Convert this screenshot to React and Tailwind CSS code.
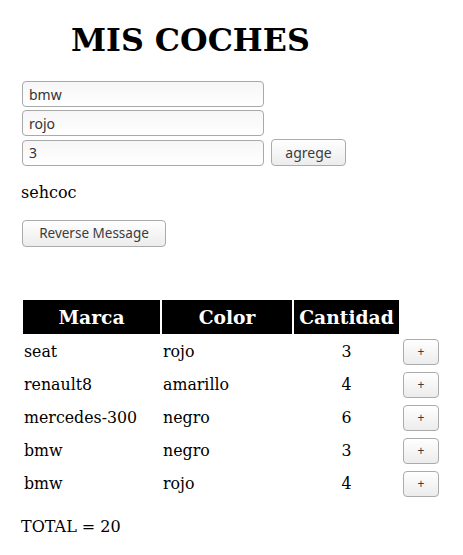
import React from "react";

const serif = { fontFamily: '"DejaVu Serif", "Liberation Serif", serif' };
const ui = { fontFamily: '"Noto Sans", "Open Sans", sans-serif' };

const rows = [
  ["seat", "rojo", 3],
  ["renault8", "amarillo", 4],
  ["mercedes-300", "negro", 6],
  ["bmw", "negro", 3],
  ["bmw", "rojo", 4],
];

function Input({ value }) {
  return (
    <div
      className="ml-[1px] w-[242px] h-[26px] border border-[#a9a9a9] rounded-[4px] bg-gradient-to-b from-[#f6f6f6] to-white pl-[6px] flex items-center text-[14px] text-[#333]"
      style={ui}
    >
      {value}
    </div>
  );
}

function Btn({ children, className = "" }) {
  return (
    <button
      className={
        "border border-[#ababab] rounded-[4px] bg-gradient-to-b from-white to-[#ececec] text-[#3c3c3c] flex items-center justify-center " +
        className
      }
      style={ui}
    >
      {children}
    </button>
  );
}

export default function App() {
  return (
    <div className="bg-white w-[463px] h-[555px] pl-[21px] text-black" style={serif}>
      <h1 className="mt-[21px] mb-[23px] h-[37px] leading-[37px] text-[31.7px] font-bold pl-[50px]" style={serif}>
        MIS COCHES
      </h1>
      <div className="flex flex-col gap-[3px]">
        <Input value="bmw" />
        <Input value="rojo" />
        <div className="flex items-center">
          <Input value="3" />
          <Btn className="ml-[7px] w-[75px] h-[27px] text-[14px]">agrege</Btn>
        </div>
      </div>
      <p className="mt-[17px] h-[19px] leading-[19px] text-[16px]">sehcoc</p>
      <Btn className="mt-[18px] ml-[1px] w-[144px] h-[27px] text-[13.5px]">Reverse Message</Btn>
      <table className="mt-[51px] border-separate border-spacing-[2px] text-[15.8px]" style={serif}>
        <thead>
          <tr>
            <th className="bg-black text-white w-[137px] h-[34px] text-[18.7px] font-bold p-0 leading-[22px]">Marca</th>
            <th className="bg-black text-white w-[130px] h-[34px] text-[18.7px] font-bold p-0 leading-[22px]">Color</th>
            <th className="bg-black text-white w-[105px] h-[34px] text-[18.7px] font-bold p-0 leading-[22px]">Cantidad</th>
            <th className="w-[39px] p-0"></th>
          </tr>
        </thead>
        <tbody>
          {rows.map((r, i) => (
            <tr key={i}>
              <td className="h-[31px] px-[1px] pt-0 pb-[1px] leading-[19px]">{r[0]}</td>
              <td className="h-[31px] px-[1px] pt-0 pb-[1px] leading-[19px]">{r[1]}</td>
              <td className="h-[31px] px-[1px] pt-0 pb-[1px] leading-[19px] text-center">{r[2]}</td>
              <td className="h-[31px] p-0 pl-[2px]">
                <Btn className="w-[36px] h-[26px] text-[12px]">+</Btn>
              </td>
            </tr>
          ))}
        </tbody>
      </table>
      <p className="mt-[16px] h-[19px] leading-[19px] text-[16px]">TOTAL = 20</p>
    </div>
  );
}
